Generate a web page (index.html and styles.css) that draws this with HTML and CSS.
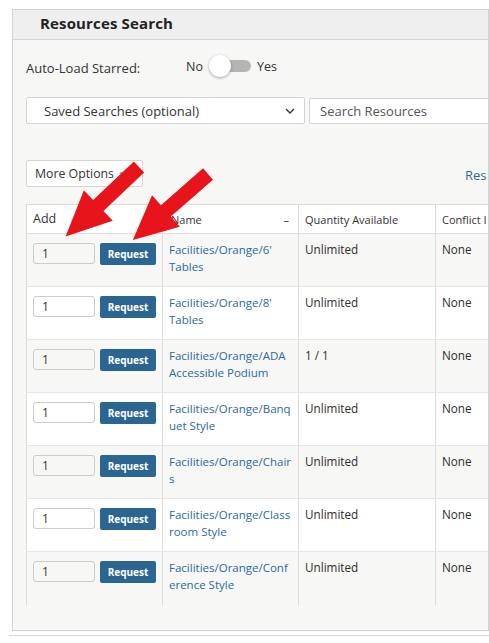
FILE: index.html
```html
<!DOCTYPE html>
<html>
<head>
<meta charset="utf-8">
<link rel="stylesheet" href="styles.css">
</head>
<body>
<div class="page">
  <div class="panel">
    <div class="panel-head"><h2 class="title">Resources Search</h2></div>
    <div class="panel-body">
      <div class="autoload">
        <span class="autoload-label">Auto-Load Starred:</span>
        <span class="opt">No</span>
        <span class="toggle"><span class="knob"></span></span>
        <span class="opt">Yes</span>
      </div>
      <div class="search-row">
        <div class="select">
          <span>Saved Searches (optional)</span>
          <svg class="chev" width="10" height="6" viewBox="0 0 10 6"><path d="M1 1l4 4 4-4" fill="none" stroke="#333" stroke-width="1.4"/></svg>
        </div>
        <div class="search-input">Search Resources</div>
      </div>
      <div class="options-row">
        <div class="more-btn">More Options <span class="caret">▾</span></div>
        <a class="reset-link">Res</a>
      </div>
      <table class="grid">
        <thead>
          <tr>
            <th class="c-add">Add</th>
            <th class="c-name"><span>Name</span><span class="sort">–</span></th>
            <th class="c-qty">Quantity Available</th>
            <th class="c-conf">Conflict I</th>
          </tr>
        </thead>
        <tbody>
          <tr class="odd"><td class="c-add"><div class="add"><span class="qty">1</span><span class="req">Request</span></div></td><td class="c-name"><a>Facilities/Orange/6' Tables</a></td><td>Unlimited</td><td>None</td></tr>
          <tr><td class="c-add"><div class="add"><span class="qty">1</span><span class="req">Request</span></div></td><td class="c-name"><a>Facilities/Orange/8' Tables</a></td><td>Unlimited</td><td>None</td></tr>
          <tr class="odd"><td class="c-add"><div class="add"><span class="qty">1</span><span class="req">Request</span></div></td><td class="c-name"><a>Facilities/Orange/ADA Accessible Podium</a></td><td>1 / 1</td><td>None</td></tr>
          <tr><td class="c-add"><div class="add"><span class="qty">1</span><span class="req">Request</span></div></td><td class="c-name"><a>Facilities/Orange/Banquet Style</a></td><td>Unlimited</td><td>None</td></tr>
          <tr class="odd"><td class="c-add"><div class="add"><span class="qty">1</span><span class="req">Request</span></div></td><td class="c-name"><a>Facilities/Orange/Chairs</a></td><td>Unlimited</td><td>None</td></tr>
          <tr><td class="c-add"><div class="add"><span class="qty">1</span><span class="req">Request</span></div></td><td class="c-name"><a>Facilities/Orange/Classroom Style</a></td><td>Unlimited</td><td>None</td></tr>
          <tr class="odd last"><td class="c-add"><div class="add"><span class="qty">1</span><span class="req">Request</span></div></td><td class="c-name"><a>Facilities/Orange/Conference Style</a></td><td>Unlimited</td><td>None</td></tr>
        </tbody>
      </table>
    </div>
  </div>
  <div class="page-rule"></div>
  <svg class="arrows" width="489" height="643" viewBox="0 0 489 643">
    <g transform="translate(139 167) rotate(136.6)">
      <polygon points="0,-7.5 56,-7.5 56,-21 101,0 56,21 56,7.5 0,7.5" fill="#e8141c"/>
    </g>
    <g transform="translate(208 174) rotate(138.7)">
      <polygon points="0,-7.5 56,-7.5 56,-21 100,0 56,21 56,7.5 0,7.5" fill="#e8141c"/>
    </g>
  </svg>
</div>
</body>
</html>
```
FILE: styles.css
```css
* { box-sizing: border-box; }
html, body { margin: 0; padding: 0; background: #fff; }
body {
  font-family: "Open Sans", "Liberation Sans", sans-serif;
  font-size: 12px;
  color: #333;
  width: 489px;
  height: 643px;
  overflow: hidden;
}
.page { position: relative; padding-top: 9px; }
.panel {
  margin-left: 12px;
  width: 477px;
  border: 1px solid #d2d2d2;
  background: #f7f7f5;
  overflow: hidden;
}
.panel-head {
  height: 30px;
  background: #efefef;
  border-bottom: 1px solid #d6d6d6;
  padding-left: 27px;
  padding-bottom: 3px;
  display: flex;
  align-items: center;
}
.title { margin: 0; font-size: 15px; font-weight: 700; color: #222; letter-spacing: 0.15px; }
.panel-body { padding: 0 0 25px 13px; }
.autoload { display: flex; align-items: center; height: 20px; margin-top: 16px; }
.autoload-label { font-size: 13px; width: 160px; margin-top: 3px; }
.opt { font-size: 12.5px; color: #333; }
.toggle {
  position: relative;
  width: 40px; height: 12px;
  margin: 0 6px 0 8px;
  background: #b5b5b5;
  border-radius: 6px;
}
.knob {
  position: absolute; left: -2px; top: -5px;
  width: 22px; height: 22px; border-radius: 50%;
  background: #fff;
  box-shadow: 0 1px 3px rgba(0,0,0,0.35);
}
.search-row { display: flex; gap: 4px; margin-top: 21px; }
.select {
  flex: 0 0 279px; height: 27px;
  background: #fff; border: 1px solid #d4d4d4; border-radius: 2px;
  display: flex; align-items: center; justify-content: space-between;
  padding: 0 9px 0 17px; font-size: 13px; color: #333;
}
.search-input {
  flex: 0 0 220px; height: 26px; margin-top: 1px;
  background: #fff; border: 1px solid #d4d4d4; border-radius: 2px;
  display: flex; align-items: center; padding-left: 10px;
  font-size: 13px; color: #555;
}
.options-row { display: flex; align-items: center; margin-top: 36px; width: 480px; }
.more-btn {
  width: 117px; height: 27px;
  background: #fff; border: 1px solid #d4d4d4; border-radius: 2px;
  display: flex; align-items: center; padding-left: 8px;
  font-size: 12.3px; color: #333;
}
.caret { font-size: 9px; margin-left: 6px; color: #555; }
.reset-link { margin-left: 322px; color: #2a6a9e; font-size: 13px; margin-top: 3px; }
.grid {
  margin-top: 17px;
  border-collapse: collapse;
  table-layout: fixed;
  width: 560px;
  background: #fff;
}
.grid th, .grid td { border-left: 1px solid #dcdcdc; vertical-align: top; text-align: left; }
.grid th {
  height: 29px; border-top: 1px solid #dcdcdc; border-bottom: 1px solid #dcdcdc;
  font-weight: 400; font-size: 11px; color: #333; padding: 0 6px; vertical-align: middle;
}
.grid th.c-add { font-size: 12.5px; padding-left: 6px; padding-bottom: 2px; }
.grid th.c-name span:first-child { padding-left: 2px; }
.sort { float: right; margin-right: 3px; }
.c-add { width: 136px; }
.c-name { width: 136px; }
.c-qty { width: 137px; }
.c-conf { width: 151px; }
.grid td { height: 53px; padding: 7px 6px 0 6px; font-size: 11.7px; line-height: 17px; border-bottom: 1px solid #e6e6e6; color: #2e2e2e; }
.grid tr.last td { border-bottom: none; }
.grid tr.odd td { background: #f7f7f5; }
.grid td.c-name { overflow-wrap: anywhere; padding-right: 4px; font-size: 11.5px; }
.grid td.c-name a { color: #2a6a9e; }
.add { display: flex; gap: 5px; margin-top: 2px; }
.qty {
  width: 63px; height: 21px;
  border: 1px solid #ccc; border-radius: 3px; background: #fff;
  padding-left: 8px; font-size: 12px; line-height: 19px; color: #333;
}
.odd .qty { background: #f7f7f5; }
.req {
  width: 57px; height: 22px;
  background: #2b6592; color: #fff; border-radius: 2px;
  font-size: 10px; font-weight: 700; text-align: center; line-height: 22px;
}
.page-rule { margin-left: 9px; margin-top: 4px; border-top: 1px solid #d6d6d6; }
.arrows { position: absolute; left: 0; top: 0; pointer-events: none; }
```
